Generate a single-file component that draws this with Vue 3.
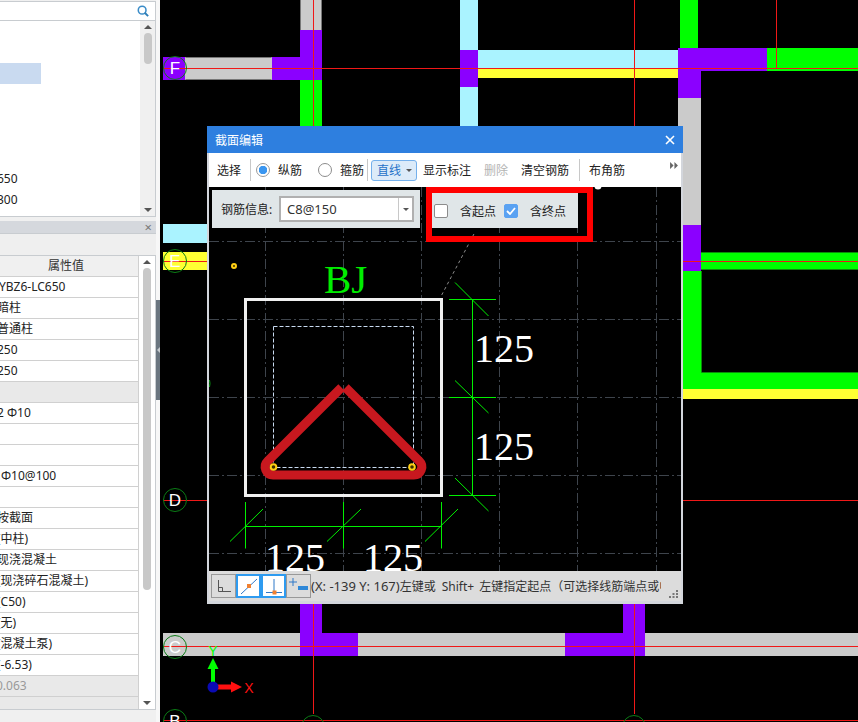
<script setup>
const propRows = [
  { text: 'YBZ6-LC650', x: -1 },
  { text: '暗柱' },
  { text: '普通柱' },
  { text: '250' },
  { text: '250' },
  { text: '', shaded: true },
  { text: '2 Φ10' },
  { text: '' },
  { text: '' },
  { text: 'Φ10@100', x: 1 },
  { text: '' },
  { text: '按截面' },
  { text: '(中柱)' },
  { text: '现浇混凝土' },
  { text: '(现浇碎石混凝土)' },
  { text: '(C50)' },
  { text: '(无)' },
  { text: '(混凝土泵)' },
  { text: '(-6.53)' },
  { text: '0.063', x: -4, shaded: true, muted: true },
  { text: '', shaded: true, short: true }
]

const PURPLE = '#8b00ff'
const GREY = '#cbcbcb'
const GREEN = '#00ff00'
const CYAN = '#aaf3ff'
const YELLOW = '#ffff33'

const walls = [
  { x: 163, y: 57, w: 22, h: 23, c: PURPLE },
  { x: 185, y: 57, w: 87, h: 23, c: GREY },
  { x: 272, y: 57, w: 50, h: 23, c: PURPLE },
  { x: 300, y: 30, w: 22, h: 27, c: PURPLE },
  { x: 300, y: 0, w: 22, h: 30, c: GREY },
  { x: 300, y: 80, w: 22, h: 50, c: GREEN },
  { x: 460, y: 0, w: 18, h: 50, c: CYAN },
  { x: 460, y: 50, w: 18, h: 37, c: PURPLE },
  { x: 460, y: 87, w: 18, h: 43, c: CYAN },
  { x: 478, y: 50, w: 200, h: 19, c: CYAN },
  { x: 478, y: 69, w: 200, h: 9, c: YELLOW },
  { x: 680, y: 0, w: 18, h: 48, c: GREEN },
  { x: 767, y: 48, w: 91, h: 23, c: GREEN },
  { x: 678, y: 48, w: 89, h: 23, c: PURPLE },
  { x: 678, y: 71, w: 23, h: 27, c: PURPLE },
  { x: 678, y: 98, w: 23, h: 127, c: GREY },
  { x: 680, y: 225, w: 21, h: 46, c: PURPLE },
  { x: 701, y: 252, w: 157, h: 18, c: GREEN },
  { x: 680, y: 271, w: 21, h: 101, c: GREEN },
  { x: 680, y: 372, w: 178, h: 17, c: GREEN },
  { x: 680, y: 389, w: 178, h: 10, c: YELLOW },
  { x: 163, y: 224, w: 50, h: 19, c: CYAN },
  { x: 163, y: 252, w: 50, h: 18, c: YELLOW },
  { x: 163, y: 633, w: 137, h: 23, c: GREY },
  { x: 300, y: 633, w: 58, h: 23, c: PURPLE },
  { x: 300, y: 600, w: 22, h: 33, c: PURPLE },
  { x: 358, y: 633, w: 207, h: 23, c: GREY },
  { x: 565, y: 633, w: 80, h: 23, c: PURPLE },
  { x: 623, y: 600, w: 22, h: 33, c: PURPLE },
  { x: 645, y: 633, w: 213, h: 23, c: GREY }
]

const axisLines = [
  { x1: 163, y1: 68.5, x2: 858, y2: 68.5 },
  { x1: 163, y1: 261.5, x2: 858, y2: 261.5 },
  { x1: 163, y1: 500.5, x2: 858, y2: 500.5 },
  { x1: 163, y1: 646.5, x2: 858, y2: 646.5 },
  { x1: 163, y1: 720.5, x2: 858, y2: 720.5 },
  { x1: 313.5, y1: 0, x2: 313.5, y2: 130 },
  { x1: 313.5, y1: 600, x2: 313.5, y2: 714 },
  { x1: 634.5, y1: 0, x2: 634.5, y2: 130 },
  { x1: 634.5, y1: 600, x2: 634.5, y2: 714 },
  { x1: 776.5, y1: 0, x2: 776.5, y2: 68 }
]

const bubbles = [
  { cx: 175, cy: 68, label: 'F' },
  { cx: 175, cy: 261, label: 'E' },
  { cx: 175, cy: 500, label: 'D' },
  { cx: 175, cy: 647, label: 'C' },
  { cx: 175, cy: 721, label: 'B' },
  { cx: 313, cy: 727, label: '' },
  { cx: 634, cy: 727, label: '' }
]

const gridX = [265.5, 343.5, 421.5, 499.5, 577.5, 656.5]
const gridY = [241.5, 319.5, 397.5, 475.5, 553.5]

const dimLines = [
  [472.5, 299.5, 472.5, 495.5],
  [449, 299.5, 496, 299.5],
  [449, 397.5, 496, 397.5],
  [449, 495.5, 496, 495.5],
  [455, 282.5, 488.5, 316],
  [455, 380.5, 488.5, 413],
  [455, 478, 488.5, 511],
  [245.5, 526.5, 441.5, 526.5],
  [245.5, 502, 245.5, 548.5],
  [343.5, 502, 343.5, 548.5],
  [441.5, 502, 441.5, 548.5],
  [230, 541.5, 263, 509],
  [327, 541.5, 361, 509],
  [425, 541.5, 458, 509]
]

const dimLabels = [
  { x: 474, y: 362, text: '125' },
  { x: 474, y: 460, text: '125' },
  { x: 265, y: 571, text: '125' },
  { x: 363, y: 571, text: '125' }
]
</script>

<template>
  <div class="workspace">
    <aside class="side-panel">
      <div class="search-row">
        <svg class="search-icon" width="12" height="12" viewBox="0 0 14 14">
          <circle cx="6" cy="6" r="4.5" fill="none" stroke="#3a8cc8" stroke-width="1.8" />
          <path d="M9 9l4 4" stroke="#2f7fb8" stroke-width="2.2" />
        </svg>
      </div>
      <div class="tree-box">
        <div class="tree-list">
          <div class="tree-selected"></div>
          <div class="tree-item">650</div>
          <div class="tree-item">300</div>
        </div>
        <div class="scroll scroll--grey">
          <i class="arrow arrow--up"></i>
          <b class="thumb thumb--short"></b>
          <i class="arrow arrow--down"></i>
        </div>
      </div>
      <div class="props-head"><span>×</span></div>
      <div class="props-tabs"></div>
      <div class="props-box">
        <div class="props-table">
          <div class="prop-row prop-row--head">属性值</div>
          <div
            v-for="(row, i) in propRows"
            :key="i"
            class="prop-row"
            :class="{ 'is-shaded': row.shaded, 'is-muted': row.muted, 'is-short': row.short }"
          >
            <span :style="{ marginLeft: (row.x ?? -3) + 'px' }">{{ row.text }}</span>
          </div>
        </div>
        <div class="scroll">
          <i class="arrow arrow--up"></i>
          <b class="thumb thumb--long"></b>
          <i class="arrow arrow--down"></i>
        </div>
      </div>
    </aside>

    <div class="splitter"><div class="splitter__handle"><i></i></div></div>

    <main class="cad-view">
      <svg class="cad-svg" width="698" height="722" viewBox="160 0 698 722">
        <rect v-for="(w, i) in walls" :key="i" :x="w.x" :y="w.y" :width="w.w" :height="w.h" :fill="w.c" />
        <path d="M185.5 57.5H271.5M185.5 79.5H271.5M300.5 0V30M321.5 0V30" stroke="#777" fill="none" />
        <path d="M701 252.5H858M701 269.5H858M701.5 271V372.5H858" stroke="#0a8a0a" fill="none" />
        <line
          v-for="(l, i) in axisLines"
          :key="'a' + i"
          :x1="l.x1"
          :y1="l.y1"
          :x2="l.x2"
          :y2="l.y2"
          stroke="#f01818"
          stroke-width="1"
          shape-rendering="crispEdges"
        />
        <g v-for="b in bubbles" :key="b.cx + '-' + b.cy">
          <circle :cx="b.cx" :cy="b.cy" r="11.5" fill="none" stroke="#0b7d16" stroke-width="1" />
          <text :x="b.cx" :y="b.cy + 6" class="bubble-label" text-anchor="middle">{{ b.label }}</text>
        </g>

        <path d="M213 683V668" stroke="#00ff00" stroke-width="4" />
        <path d="M213 658l5.5 11h-11z" fill="#00ff00" />
        <path d="M216 687H231" stroke="#ff1010" stroke-width="5" />
        <path d="M242 687l-11 -5.5v11z" fill="#ff1010" />
        <circle cx="213" cy="687" r="5.5" fill="#0a0ab4" />
        <text x="213" y="656" class="axis-label axis-label--y" text-anchor="middle">Y</text>
        <text x="249" y="693" class="axis-label axis-label--x" text-anchor="middle">X</text>
      </svg>

      <section class="dialog" aria-label="截面编辑">
        <header class="dialog__title">
          <span>截面编辑</span>
          <svg width="10" height="10" viewBox="0 0 10 10">
            <path d="M1 1l8 8M9 1l-8 8" stroke="#fff" stroke-width="1.6" />
          </svg>
        </header>

        <div class="toolbar">
          <span class="tool tool--first">选择</span>
          <i class="tool-sep"></i>
          <span class="radio radio--on"></span>
          <span class="tool tool--radio">纵筋</span>
          <span class="radio"></span>
          <span class="tool tool--radio tool--radio-last">箍筋</span>
          <i class="tool-sep tool-sep--mid"></i>
          <span class="tool-line">直线<i></i></span>
          <span class="tool tool--show">显示标注</span>
          <span class="tool tool--off">删除</span>
          <span class="tool tool--clear">清空钢筋</span>
          <i class="tool-sep tool-sep--last"></i>
          <span class="tool tool--corner">布角筋</span>
          <span class="tool-more">
            <svg width="8" height="7" viewBox="0 0 9 8"><path d="M0 0l4 4-4 4zM5 0l4 4-4 4z" fill="#666" /></svg>
          </span>
        </div>

        <div class="section-canvas">
          <svg class="section-svg" width="472" height="384" viewBox="209 187 472 384">
            <g class="grid">
              <line v-for="x in gridX" :key="'x' + x" :x1="x" :x2="x" y1="187" y2="571" />
              <line v-for="y in gridY" :key="'y' + y" :y1="y" :y2="y" x1="209" x2="681" />
            </g>
            <path d="M441.7 295L475 232" stroke="#8a8a8a" stroke-dasharray="3 3" fill="none" />
            <path d="M209.500 380Q210.500 383.500 209.500 387" stroke="#0b9d16" fill="none" />
            <circle cx="598" cy="186" r="3.5" fill="#fff" />
            <rect x="245.5" y="299.5" width="196" height="196" fill="none" stroke="#f0f0f0" stroke-width="3" />
            <rect x="273.5" y="326.5" width="140" height="141" fill="none" stroke="#c8daf0" stroke-dasharray="4 2" />
            <path
              d="M341.5 387.5L267.6 461.3A8 8 0 0 0 273.3 475H413.7A8 8 0 0 0 419.4 461.3L345.5 387.5"
              fill="none"
              stroke="#c8181f"
              stroke-width="9"
            />
            <g fill="#3a3000" stroke="#ffcf14" stroke-width="2">
              <circle cx="273.5" cy="467" r="2.8" />
              <circle cx="412" cy="467" r="2.8" />
              <circle cx="234" cy="266" r="2" />
            </g>
            <line
              v-for="(d, i) in dimLines"
              :key="'d' + i"
              :x1="d[0]"
              :y1="d[1]"
              :x2="d[2]"
              :y2="d[3]"
              stroke="#00f000"
              stroke-width="1"
            />
            <text x="324" y="293" class="bj-label">BJ</text>
            <text v-for="(t, i) in dimLabels" :key="'t' + i" :x="t.x" :y="t.y" class="dim-label">{{ t.text }}</text>
          </svg>

          <div class="section-tools">
            <div class="info-panel">
              <label>钢筋信息:</label>
              <div class="combo">
                <span>C8@150</span>
                <i></i>
              </div>
            </div>
            <div class="point-panel">
              <span class="check"></span>
              <span class="point-label">含起点</span>
              <span class="check check--on">
                <svg width="10" height="8" viewBox="0 0 10 8"><path d="M1 4l3 3 5-6" fill="none" stroke="#fff" stroke-width="1.8" /></svg>
              </span>
              <span class="point-label">含终点</span>
            </div>
          </div>
          <div class="callout"></div>
        </div>

        <footer class="status">
          <span class="snap">
            <svg width="16" height="16" viewBox="0 0 16 16">
              <path d="M2.5 2V13.5H15M2.5 9.5H6.5V13.5" fill="none" stroke="#555" />
            </svg>
          </span>
          <span class="snap snap--on">
            <svg width="20" height="20" viewBox="0 0 20 20">
              <path d="M2 18L18 3" stroke="#2f78c8" />
              <rect x="8" y="8" width="4" height="4" fill="#f08030" />
            </svg>
          </span>
          <span class="snap snap--on">
            <svg width="20" height="20" viewBox="0 0 20 20">
              <path d="M10 3V16M2 16.5H18" stroke="#2f78c8" />
              <rect x="8.5" y="14.5" width="4" height="4" fill="#f08030" />
            </svg>
          </span>
          <span class="snap">
            <svg width="20" height="20" viewBox="0 0 20 20">
              <path d="M4 2V10M0 6H8" stroke="#2f78c8" />
              <rect x="9" y="10" width="10" height="4" fill="#2f88d8" />
            </svg>
          </span>
          <span class="status__text"><span class="status__coord">(X: -139 Y: 167)</span>左键或<span class="status__key">Shift+</span>左键指定起点（可选择线筋端点或中</span>
          <svg class="grip" width="10" height="8" viewBox="0 0 10 8" fill="#777">
            <rect x="7" y="0" width="2" height="2" />
            <rect x="3.500" y="3" width="2" height="2" />
            <rect x="7" y="3" width="2" height="2" />
            <rect x="0" y="6" width="2" height="2" />
            <rect x="3.500" y="6" width="2" height="2" />
            <rect x="7" y="6" width="2" height="2" />
          </svg>
        </footer>
      </section>
    </main>
  </div>
</template>

<style scoped>
.workspace {
  display: flex;
  width: 858px;
  height: 722px;
  overflow: hidden;
  background: #f0f0f0;
  font-family: "Noto Sans", "Noto Sans CJK SC", sans-serif;
  font-size: 12px;
  color: #222;
}

.side-panel {
  display: flex;
  flex-direction: column;
  flex: none;
  width: 156px;
  padding-top: 1px;
  background: #f0f0f0;
}

.search-row {
  display: flex;
  align-items: center;
  justify-content: flex-end;
  flex: none;
  height: 20px;
  padding-right: 6px;
  border-top: 1px solid #c8ccd0;
  border-bottom: 1px solid #c8ccd0;
  border-right: 1px solid #c8ccd0;
  background: #fff;
  box-sizing: border-box;
}

.tree-box {
  display: flex;
  flex: none;
  height: 196px;
  border-right: 1px solid #c8ccd0;
  border-bottom: 1px solid #c8ccd0;
  box-sizing: border-box;
  background: #fff;
}

.tree-list {
  flex: 1;
  padding-top: 42px;
  overflow: hidden;
}

.tree-selected {
  width: 41px;
  height: 21px;
  margin-bottom: 84px;
  background: #c9daf0;
}

.tree-item {
  height: 21px;
  margin-left: -3px;
  font-size: 12px;
  line-height: 21px;
}

.scroll {
  display: flex;
  flex-direction: column;
  align-items: center;
  flex: none;
  width: 16px;
  background: #fff;
}

.scroll--grey {
  width: 15px;
  background: #f0f0f0;
}

.arrow {
  flex: none;
  width: 0;
  height: 0;
  margin: 4px 0;
  border-left: 4px solid transparent;
  border-right: 4px solid transparent;
}

.arrow--up {
  border-bottom: 4px solid #555;
}

.arrow--down {
  margin-top: auto;
  border-top: 4px solid #555;
}

.thumb {
  flex: none;
  width: 8px;
  border-radius: 4px;
  background: #c8c8c8;
}

.thumb--short {
  height: 31px;
}

.thumb--long {
  height: 322px;
}

.props-head {
  display: flex;
  align-items: center;
  justify-content: flex-end;
  flex: none;
  height: 12px;
  margin-top: 4px;
  padding-right: 4px;
  background: #d5d8dd;
  color: #777;
  font-size: 13px;
  line-height: 12px;
}

.props-tabs {
  flex: none;
  height: 21px;
  border-top: 1px solid #c8ccd0;
  border-bottom: 1px solid #c8ccd0;
  background: #efefef;
}

.props-box {
  display: flex;
  flex: none;
  height: 454px;
  border-right: 1px solid #c8ccd0;
  border-bottom: 1px solid #c8ccd0;
  background: #fff;
  box-sizing: border-box;
}

.props-table {
  flex: 1;
  min-width: 0;
  border-right: 1px solid #d0d0d0;
  overflow: hidden;
}

.prop-row {
  height: 21px;
  border-bottom: 1px solid #d0d0d0;
  box-sizing: border-box;
  overflow: hidden;
  font-size: 12px;
  line-height: 19px;
  white-space: nowrap;
}

.prop-row span {
  display: inline-block;
}

.prop-row--head {
  padding-left: 48px;
  background: #f0f0f0;
  color: #333;
  line-height: 20px;
}

.is-shaded {
  background: #e9e9e9;
}

.is-muted {
  color: #999;
}

.is-short {
  height: 13px;
  border-bottom: 0;
}

.splitter {
  display: flex;
  align-items: center;
  flex: none;
  width: 4px;
  background: #f7f7f7;
}

.splitter__handle {
  display: flex;
  align-items: center;
  justify-content: center;
  width: 4px;
  height: 100px;
  margin-top: -22px;
  background: #6b7680;
}

.splitter__handle i {
  width: 0;
  height: 0;
  border-top: 3px solid transparent;
  border-bottom: 3px solid transparent;
  border-right: 3px solid #c8ccd0;
}

.cad-view {
  position: relative;
  flex: 1;
  background: #000;
  overflow: hidden;
}

.cad-svg {
  display: block;
}

.bubble-label {
  fill: #fff;
  font-family: "Liberation Sans", sans-serif;
  font-size: 17px;
}

.axis-label {
  font-family: "Liberation Sans", sans-serif;
  font-size: 14px;
  font-weight: 400;
}

.axis-label--y {
  fill: #00ff00;
}

.axis-label--x {
  fill: #ff1010;
}

.dialog {
  position: absolute;
  left: 47px;
  top: 126px;
  display: flex;
  flex-direction: column;
  width: 476px;
  height: 478px;
  background: #d3d6dc;
}

.dialog__title {
  display: flex;
  align-items: center;
  justify-content: space-between;
  flex: none;
  height: 27px;
  padding: 0 8px;
  background: #2e7fdf;
  color: #fff;
  font-size: 12px;
}

.toolbar {
  display: flex;
  align-items: center;
  flex: none;
  height: 34px;
  margin: 0 2px;
  padding-left: 2px;
  background: #fff;
}

.tool {
  flex: none;
  color: #222;
  white-space: nowrap;
}

.tool--first {
  width: 36px;
  padding-left: 6px;
  box-sizing: border-box;
}

.tool-sep {
  flex: none;
  width: 1px;
  height: 22px;
  margin: 0 5px 0 3px;
  background: #c8c8c8;
}

.tool-sep--mid {
  margin: 0 3px 0 3px;
}

.tool-sep--last {
  margin: 0 9px 0 10px;
}

.radio {
  flex: none;
  width: 14px;
  height: 14px;
  margin-right: 8px;
  border: 1px solid #8c8c8c;
  border-radius: 50%;
  box-sizing: border-box;
  background: #fff;
}

.radio--on {
  border-color: #999;
  background: radial-gradient(circle, #3a96f0 0 4px, #fff 4.5px);
}

.tool--radio {
  width: 24px;
  margin-right: 16px;
}

.tool--radio-last {
  margin-right: 0;
}

.tool-line {
  display: flex;
  align-items: center;
  flex: none;
  width: 46px;
  height: 21px;
  padding-left: 5px;
  border: 1px solid #74b0ec;
  border-radius: 3px;
  box-sizing: border-box;
  background: #dcebf9;
  color: #1f72c8;
}

.tool-line i {
  width: 0;
  height: 0;
  margin-left: 5px;
  border-left: 3px solid transparent;
  border-right: 3px solid transparent;
  border-top: 3px solid #555;
}

.tool--show {
  margin-left: 6px;
}

.tool--off {
  margin-left: 13px;
  color: #b4b4b4;
}

.tool--clear {
  margin-left: 13px;
}

.tool-more {
  display: flex;
  margin-left: auto;
  margin-right: 3px;
  margin-top: -9px;
}

.section-canvas {
  position: relative;
  flex: none;
  height: 384px;
  margin: 0 2px;
  background: #000;
  overflow: hidden;
}

.section-svg {
  display: block;
}

.grid line {
  stroke: #3e444c;
  stroke-dasharray: 10 3 2 3;
}

.bj-label {
  fill: #00ee00;
  font-family: "Liberation Serif", serif;
  font-size: 41px;
}

.dim-label {
  fill: #fff;
  font-family: "Liberation Serif", serif;
  font-size: 40px;
}

.section-tools {
  position: absolute;
  left: 3px;
  top: 3px;
  display: flex;
  gap: 12px;
  height: 38px;
}

.info-panel {
  display: flex;
  align-items: center;
  width: 208px;
  height: 38px;
  padding-left: 9px;
  box-sizing: border-box;
  background: #e0e6e8;
  color: #222;
}

.info-panel label {
  width: 58px;
  white-space: nowrap;
}

.combo {
  display: flex;
  align-items: center;
  justify-content: space-between;
  width: 135px;
  height: 26px;
  padding-left: 6px;
  border: 2px solid #b0b0b0;
  box-sizing: border-box;
  background: #fff;
  font-size: 13px;
  color: #333;
}

.combo i {
  display: flex;
  align-items: center;
  justify-content: center;
  width: 13px;
  height: 100%;
  border-left: 1px solid #c8c8c8;
}

.combo i::after {
  content: "";
  width: 0;
  height: 0;
  border-left: 3px solid transparent;
  border-right: 3px solid transparent;
  border-top: 3px solid #555;
}

.point-panel {
  display: flex;
  align-items: center;
  width: 146px;
  height: 35px;
  margin-top: 3px;
  padding-left: 2px;
  box-sizing: border-box;
  background: #e0e6e8;
}

.check {
  display: flex;
  align-items: center;
  justify-content: center;
  flex: none;
  width: 14px;
  height: 14px;
  border: 1px solid #8c8c8c;
  border-radius: 2px;
  box-sizing: border-box;
  background: #fff;
}

.check--on {
  border-color: #5aa2f2;
  background: #5aa2f2;
}

.point-label {
  flex: none;
  width: 37px;
  margin: 0 7px 0 12px;
  white-space: nowrap;
}

.callout {
  position: absolute;
  left: 217px;
  top: 0;
  width: 167px;
  height: 55px;
  border: 6px solid #ff0000;
  box-sizing: border-box;
}

.status {
  display: flex;
  align-items: center;
  flex: none;
  height: 30px;
  margin: 0 2px;
  padding-left: 2px;
  background: #dcdcdc;
  position: relative;
}

.snap {
  display: flex;
  align-items: center;
  justify-content: center;
  flex: none;
  width: 25px;
  height: 24px;
  border: 1px solid #999;
  box-sizing: border-box;
}

.snap--on {
  border: 2px solid #2e9bf0;
  background: #fff;
}

.status__text {
  flex: none;
  width: 350px;
  overflow: hidden;
  color: #333;
  font-size: 12px;
  white-space: nowrap;
}

.status__coord {
  font-size: 13px;
}

.status__key {
  margin: 0 5px 0 6px;
}

.grip {
  position: absolute;
  right: 2px;
  bottom: 3px;
}
</style>
